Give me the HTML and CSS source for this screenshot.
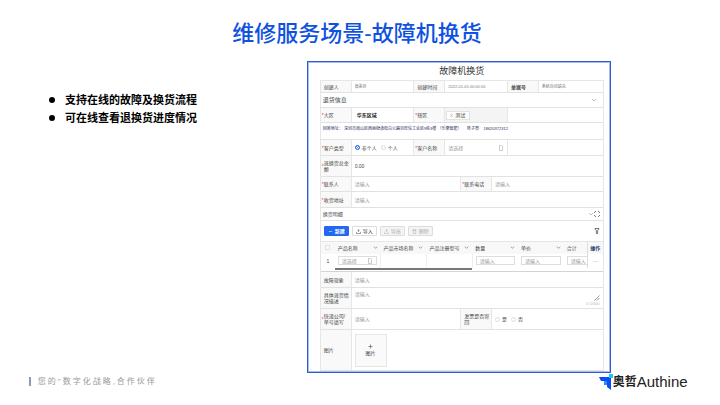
FILE: index.html
```html
<!DOCTYPE html>
<html lang="zh-CN">
<head>
    <meta charset="UTF-8">
    <meta name="viewport" content="width=device-width, initial-scale=1.0">
    <title>维修服务场景-故障机换货</title>
    <link rel="stylesheet" href="styles.css">
</head>
<body>
    <h1>维修服务场景-故障机换货</h1>

    <main>
        <ul class="points">
            <li>支持在线的故障及换货流程</li>
            <li>可在线查看退换货进度情况</li>
        </ul>

        <form class="panel">
            <h2>故障机换货</h2>
            <div class="sheet">
                <div class="row six meta">
                    <span class="label">创建人</span><span class="value">蔡美廷</span>
                    <span class="label">创建时间</span><span class="value">2022-01-05 00:00:00</span>
                    <span class="label strong">单据号</span><span class="value">系统自动填充</span>
                </div>

                <div class="row section">
                    <h3>退货信息</h3>
                    <svg class="chevron" viewBox="0 0 6 6"><path d="M1 2l2 2 2-2"/></svg>
                </div>

                <div class="row six h15">
                    <label class="label required" for="region">大区</label>
                    <div class="value"><input id="region" class="region" type="text" value="华东区域"></div>
                    <span class="label required">辖区</span>
                    <div class="value picker">
                        <span class="tag"><svg viewBox="0 0 6 6"><circle cx="3" cy="2" r="1"/><path d="M1 5q2-3 4 0"/></svg>测试</span>
                    </div>
                    <div class="value wide"></div>
                </div>

                <p class="row address">回寄地址：&nbsp;深圳市南山区西丽街道松白公路百旺信工业区9栋3楼&nbsp;（乐摩智能）&nbsp;&nbsp;&nbsp;&nbsp; 陈子豪&nbsp;&nbsp;&nbsp; 18620372312</p>

                <div class="row six h16">
                    <span class="label required">客户类型</span>
                    <div class="value radios">
                        <label><input type="radio" name="type" checked>非个人</label>
                        <label><input type="radio" name="type">个人</label>
                    </div>
                    <label class="label required" for="customer">客户名称</label>
                    <div class="value">
                        <input id="customer" type="text" placeholder="请选择">
                        <svg class="doc" viewBox="0 0 6 6"><path d="M1.500.5h2l1 1v4h-3z"/></svg>
                    </div>
                    <div class="value wide"></div>
                </div>

                <div class="row two h21">
                    <label class="label required" for="amount">退换货总金额</label>
                    <div class="value"><input id="amount" type="text" value="0.00"></div>
                </div>

                <div class="row four h15">
                    <label class="label required" for="contact">联系人</label>
                    <div class="value"><input id="contact" type="text" placeholder="请输入"></div>
                    <label class="label required" for="phone">联系电话</label>
                    <div class="value"><input id="phone" type="text" placeholder="请输入"></div>
                </div>

                <div class="row two h16">
                    <label class="label required" for="addr">收货地址</label>
                    <div class="value"><input id="addr" type="text" placeholder="请输入"></div>
                </div>

                <div class="row detail">
                    <h4>换货明细</h4>
                    <div class="tools">
                        <svg class="chevron" viewBox="0 0 6 6"><path d="M1 2l2 2 2-2"/></svg>
                        <svg class="expand" viewBox="0 0 6 6"><path d="M.5 2V.5H2M4 .5h1.500V2M5.500 4v1.500H4M2 5.500H.5V4"/></svg>
                    </div>
                </div>

                <div class="toolbar">
                    <button type="button" class="primary"><svg viewBox="0 0 6 6"><path d="M1 3h4"/></svg>新建</button>
                    <button type="button"><svg viewBox="0 0 6 6"><path d="M3 .5v3M2 2l1-1 1 1M.5 3.500v2h5v-2"/></svg>导入</button>
                    <button type="button" disabled><svg viewBox="0 0 6 6"><path d="M3 .5v3M2 2l1-1 1 1M.5 3.500v2h5v-2"/></svg>导出</button>
                    <button type="button" disabled><svg viewBox="0 0 6 6"><path d="M.5 1.500h5M2 1.500v-1h2v1M1.500 1.500v4h3v-4"/></svg>删除</button>
                    <svg class="filter" viewBox="0 0 6 6"><path d="M1 .5h4L3.600 2.800v2.700H2.400V2.800z"/></svg>
                </div>

                <div class="grid">
                    <table>
                        <colgroup>
                            <col class="c-check"><col><col><col><col><col><col class="c-sum"><col class="c-op">
                        </colgroup>
                        <thead>
                            <tr>
                                <th><input type="checkbox" aria-label="全选"></th>
                                <th><span>产品名称<svg viewBox="0 0 6 6"><path d="M1 2l2 2 2-2"/></svg></span></th>
                                <th><span>产品市场名称<svg viewBox="0 0 6 6"><path d="M1 2l2 2 2-2"/></svg></span></th>
                                <th><span>产品注册型号<svg viewBox="0 0 6 6"><path d="M1 2l2 2 2-2"/></svg></span></th>
                                <th><span>数量<svg viewBox="0 0 6 6"><path d="M1 2l2 2 2-2"/></svg></span></th>
                                <th><span>单价<svg viewBox="0 0 6 6"><path d="M1 2l2 2 2-2"/></svg></span></th>
                                <th><span>合计</span></th>
                                <th class="op">操作</th>
                            </tr>
                        </thead>
                        <tbody>
                            <tr>
                                <td class="num">1</td>
                                <td class="line">
                                    <div class="box">
                                        <input type="text" placeholder="请选择" aria-label="产品名称">
                                        <svg class="doc" viewBox="0 0 6 6"><path d="M1.500.5h2l1 1v4h-3z"/></svg>
                                    </div>
                                </td>
                                <td class="line"></td>
                                <td class="line"></td>
                                <td><div class="box"><input type="text" placeholder="请输入" aria-label="数量"></div></td>
                                <td><div class="box"><input type="text" placeholder="请输入" aria-label="单价"></div></td>
                                <td><div class="box cut"><input type="text" placeholder="请输入" aria-label="合计"></div></td>
                                <td class="op">···</td>
                            </tr>
                        </tbody>
                    </table>
                    <div class="scroll"></div>
                </div>

                <div class="row two h16">
                    <label class="label" for="fault">故障现象</label>
                    <div class="value"><input id="fault" type="text" placeholder="请输入"></div>
                </div>

                <div class="row two h21">
                    <label class="label" for="desc">具体退货情况描述</label>
                    <div class="value area">
                        <textarea id="desc" placeholder="请输入"></textarea>
                        <div class="count">
                            <svg viewBox="0 0 6 6"><path d="M.5 5.500l5-5M3 5.500L5.500 3"/></svg>
                            <span>0 /2000</span>
                        </div>
                    </div>
                </div>

                <div class="row four h21">
                    <label class="label required" for="express">快递公司/单号填写</label>
                    <div class="value"><input id="express" type="text" placeholder="请输入"></div>
                    <span class="label">发票是否寄回</span>
                    <div class="value radios">
                        <label><input type="radio" name="invoice">是</label>
                        <label><input type="radio" name="invoice">否</label>
                    </div>
                </div>

                <div class="row two photo">
                    <span class="label">图片</span>
                    <div class="value">
                        <button type="button" class="upload"><svg viewBox="0 0 6 6"><path d="M3 .5v5M.5 3h5"/></svg>图片</button>
                    </div>
                </div>
            </div>
        </form>
    </main>

    <footer>
        <p class="slogan">您的"数字化战略,合作伙伴</p>
        <div class="logo">
            <svg viewBox="0 0 14 16">
                <path fill="#0b4df5" d="M0 3h10v4H2z"/>
                <path fill="#2b8cff" d="M5 7h3v4H5z"/>
                <path fill="#0b4df5" d="M8 4h4v12l-4-3z"/>
                <path fill="#22c4f5" d="M10 0h4v4h-4z"/>
            </svg>
            <strong>奥哲</strong><span>Authine</span>
        </div>
    </footer>
</body>
</html>
```
FILE: styles.css
```css
* {
    box-sizing: border-box;
}
body {
    margin: 0;
    min-height: 100vh;
    background: #fff;
    color: #000;
    font-family: "Liberation Sans", "Noto Sans CJK SC", sans-serif;
}
h1, h2, h3, h4, p, ul {
    margin: 0;
    padding: 0;
    font-weight: normal;
}
h1 {
    padding: 18px 6px 11px 0;
    font-size: 22px;
    line-height: 32px;
    font-weight: 500;
    text-align: center;
    color: #0f52e0;
}
svg {
    width: 6px;
    height: 6px;
    flex: none;
    fill: none;
    stroke: currentColor;
    stroke-width: 0.6;
}
main {
    display: grid;
    grid-template-columns: 258fr 304fr;
    padding: 0 15.2% 0 6.800%;
}
.points {
    list-style: none;
    padding-top: 30px;
    font-size: 11px;
    line-height: 18px;
    font-weight: bold;
}
.points li {
    display: flex;
    align-items: center;
    gap: 10px;
}
.points li::before {
    content: "";
    width: 6px;
    height: 6px;
    border-radius: 50%;
    background: #000;
}

/* form */
.panel {
    border: 1px solid #2f5ccc;
    outline: 1px solid #a9bdec;
    outline-offset: -2px;
    padding: 3px 6px 1px 12px;
    font-size: 5px;
    line-height: 6px;
    color: #444;
}
.panel h2 {
    font-size: 9px;
    line-height: 12px;
    padding-bottom: 3px;
    text-align: center;
    color: #333;
}
.sheet {
    border: 1px solid #e6e6e6;
    border-width: 1px 1px 0;
}
.row {
    display: grid;
    border-bottom: 1px solid #e2e2e2;
}
.six {
    grid-template-columns: 31fr 63fr 31fr 63fr 31fr 64fr;
}
.four {
    grid-template-columns: 31fr 110fr 31fr 111fr;
}
.two {
    grid-template-columns: 31fr 252fr;
}
.meta {
    min-height: 12px;
}
.h15 {
    min-height: 15px;
}
.h16 {
    min-height: 16px;
}
.h21 {
    min-height: 21px;
}
.photo {
    min-height: 41px;
}
.label {
    display: flex;
    align-items: center;
    padding: 0 1px;
    background: #f9f9f9;
    border-right: 1px solid #e6e6e6;
}
.label::before {
    content: "";
    flex: none;
    width: 2px;
    color: #e34d4d;
}
.label.required::before {
    content: "*";
}
.label.strong {
    font-weight: bold;
}
.value {
    display: flex;
    align-items: center;
    min-width: 0;
    padding: 0 3px;
    border-right: 1px solid #e6e6e6;
}
.value:last-child {
    border-right: 0;
}
.meta .value {
    font-size: 4px;
    color: #777;
}
.wide {
    grid-column: span 2;
}
input[type="text"], textarea {
    width: 100%;
    min-width: 0;
    padding: 0;
    border: 0;
    background: none;
    font: inherit;
    color: inherit;
    outline: 0;
    resize: none;
}
::placeholder {
    color: #999;
    opacity: 1;
}
.value input.region {
    padding-left: 2px;
    font-weight: bold;
    color: #222;
}
.picker {
    background: #f4f4f4;
    padding: 0 1px;
}
.tag {
    display: flex;
    align-items: center;
    gap: 1px;
    height: 9px;
    padding: 0 4px 0 2px;
    border: 1px solid #e2e2e2;
    background: #fff;
}
.tag svg {
    width: 5px;
    height: 5px;
    color: #aaa;
}
.section {
    display: flex;
    align-items: center;
    justify-content: space-between;
    min-height: 15px;
    padding: 0 6px 0 2px;
}
.section h3 {
    font-size: 6px;
    line-height: 8px;
}
.chevron {
    color: #999;
}
.address {
    min-height: 17px;
    padding: 3px 2px;
    font-size: 4px;
    color: #1f2f57;
}
.radios {
    gap: 4px;
}
.radios label {
    display: flex;
    align-items: center;
    gap: 2px;
}
input[type="radio"], input[type="checkbox"] {
    appearance: none;
    width: 5px;
    height: 5px;
    margin: 0;
    border: 1px solid #ddd;
    border-radius: 50%;
    background: #fff;
}
input[type="radio"]:checked {
    border-color: #2468f2;
    background: #2468f2;
    box-shadow: inset 0 0 0 1px #fff;
}
input[type="checkbox"] {
    display: block;
    margin: 0 auto;
    border-radius: 1px;
}
.doc {
    color: #aaa;
}
.detail {
    display: flex;
    align-items: center;
    justify-content: space-between;
    min-height: 13px;
    padding: 0 3px 0 2px;
}
.detail h4 {
    font-size: 5px;
}
.tools {
    display: flex;
}
.expand {
    color: #222;
    stroke-dasharray: 1 1;
}

/* detail table */
.toolbar {
    display: flex;
    align-items: center;
    gap: 3px;
    min-height: 20px;
    padding: 0 3px;
}
.toolbar button {
    display: flex;
    align-items: center;
    justify-content: center;
    gap: 2px;
    width: 25px;
    height: 10px;
    padding: 0;
    border: 1px solid #ddd;
    border-radius: 1px;
    background: #fff;
    font: inherit;
    color: #333;
}
.toolbar button svg {
    width: 5px;
    height: 5px;
}
.toolbar .primary {
    border-color: #2468f2;
    background: #2468f2;
    font-weight: bold;
    color: #fff;
}
.toolbar button:disabled {
    background: #f4f4f4;
    color: #aaa;
}
.filter {
    margin-left: auto;
    color: #222;
}
.grid {
    min-height: 31px;
    border-bottom: 1px solid #d4d4d4;
}
table {
    width: 100%;
    table-layout: fixed;
    border-collapse: collapse;
}
.c-check {
    width: 5%;
}
.c-sum {
    width: 8.500%;
}
.c-op {
    width: 5.300%;
}
th, td {
    padding: 0 3px;
    overflow: hidden;
    text-align: left;
    white-space: nowrap;
}
th {
    height: 12px;
    background: #f8f8f8;
    border-top: 1px solid #e6e6e6;
    font-weight: normal;
}
td {
    height: 14px;
}
th span {
    display: flex;
    align-items: center;
    justify-content: space-between;
}
th svg {
    width: 5px;
    height: 5px;
}
.num {
    text-align: center;
}
.line {
    border-right: 1px solid #eee;
}
.op {
    padding: 0;
    border-left: 1px solid #ddd;
    text-align: center;
}
th.op {
    font-weight: bold;
    color: #24406e;
}
.box {
    display: flex;
    align-items: center;
    height: 9px;
    padding: 0 3px;
    border: 1px solid #ddd;
}
.cut {
    margin-right: -3px;
    border-right: 0;
    padding-right: 0;
}
.scroll {
    width: 48.500%;
    height: 2px;
    margin: 0 0 0 5%;
    background: #777;
}

.area {
    align-items: stretch;
    padding: 3px 3px 1px;
}
.area textarea {
    height: 16px;
}
.count {
    display: flex;
    flex-direction: column;
    align-items: flex-end;
    justify-content: flex-end;
    white-space: nowrap;
    font-size: 4px;
    color: #bbb;
}
.count svg {
    color: #555;
}
.upload {
    display: flex;
    flex-direction: column;
    align-items: center;
    justify-content: center;
    gap: 1px;
    width: 32px;
    height: 33px;
    padding: 0;
    border: 1px solid #e6e6e6;
    background: #fafafa;
    font: inherit;
    color: #333;
}
.upload svg {
    width: 5px;
    height: 5px;
}

footer {
    display: flex;
    align-items: flex-start;
    justify-content: space-between;
    padding: 0 4.500% 0 4%;
}
.slogan {
    margin-top: 4px;
    padding-left: 7px;
    border-left: 2px solid #8c9ab8;
    font-size: 8px;
    line-height: 9px;
    letter-spacing: 2px;
    color: #999;
}
.logo {
    display: flex;
    align-items: center;
    color: #222;
    line-height: 18px;
}
.logo svg {
    width: 14px;
    height: 16px;
    stroke: none;
}
.logo strong {
    font-size: 12px;
}
.logo span {
    font-size: 15px;
}
```
